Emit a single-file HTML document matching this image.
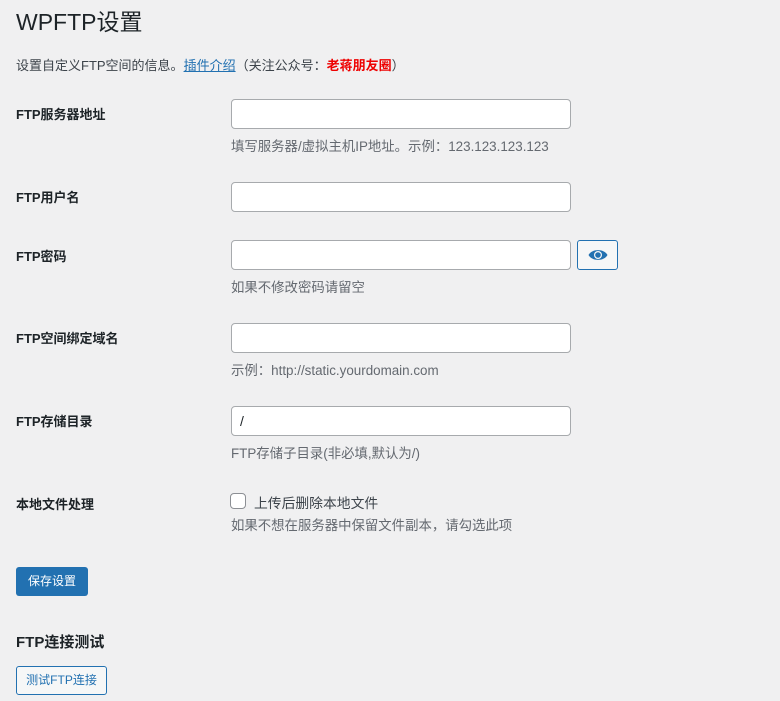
<!DOCTYPE html>
<html><head><meta charset="utf-8"><style>
body{margin:0;background:#f0f0f1;width:780px;height:701px;overflow:hidden;font-family:"Liberation Sans","Noto Sans CJK SC",sans-serif;color:#1d2327;font-size:13px;position:relative}
.a{position:absolute;white-space:nowrap}
h1{position:absolute;left:16px;top:7px;margin:0;font-size:23px;font-weight:400;line-height:30px}
.lbl{font-weight:600;font-size:13px}
.in{position:absolute;left:231px;width:338px;height:28px;background:#fff;border:1px solid #a7aaad;border-radius:4px}
.d{color:#646970;font-size:13.4px}
</style></head><body>
<h1>WPFTP设置</h1>
<div class="a" style="left:16px;top:55px;color:#3c434a">设置自定义FTP空间的信息。<a style="color:#2271b1;text-decoration:underline">插件介绍</a>（关注公众号：<span style="color:#e00;font-weight:600">老蒋朋友圈</span>）</div>

<div class="a lbl" style="left:16px;top:104px">FTP服务器地址</div>
<div class="in" style="top:99px"></div>
<div class="a d" style="left:231px;top:135px">填写服务器/虚拟主机IP地址。示例：123.123.123.123</div>

<div class="a lbl" style="left:16px;top:187px">FTP用户名</div>
<div class="in" style="top:182px"></div>

<div class="a lbl" style="left:16px;top:246px">FTP密码</div>
<div class="in" style="top:240px"></div>
<div class="a" style="left:577px;top:240px;width:39px;height:28px;border:1px solid #2271b1;border-radius:3px;background:#f6f7f7">
<svg width="20" height="14" viewBox="0 0 20 14" style="position:absolute;left:10px;top:7px"><path d="M0.5 7C4 0.5 16 0.5 19.5 7C16 13.5 4 13.5 0.5 7Z" fill="#2271b1"/><circle cx="10" cy="7" r="4" fill="#f6f7f7"/><circle cx="10" cy="7" r="2.8" fill="#2271b1"/></svg></div>
<div class="a d" style="left:231px;top:276px">如果不修改密码请留空</div>

<div class="a lbl" style="left:16px;top:328px">FTP空间绑定域名</div>
<div class="in" style="top:323px"></div>
<div class="a d" style="left:231px;top:359px">示例：http://static.yourdomain.com</div>

<div class="a lbl" style="left:16px;top:411px">FTP存储目录</div>
<div class="in" style="top:406px"><span style="position:absolute;left:8px;top:6px;font-size:14px">/</span></div>
<div class="a d" style="left:231px;top:442px">FTP存储子目录(非必填,默认为/)</div>

<div class="a lbl" style="left:16px;top:494px">本地文件处理</div>
<div class="a" style="left:230px;top:493px;width:14px;height:14px;border:1px solid #8c8f94;border-radius:4px;background:#fff"></div>
<div class="a" style="left:254px;top:492px;font-size:13.8px;color:#3c434a">上传后删除本地文件</div>
<div class="a d" style="left:231px;top:514px">如果不想在服务器中保留文件副本，请勾选此项</div>

<div class="a" style="left:16px;top:567px;width:72px;height:29px;background:#2271b1;border-radius:3px;color:#fff;font-size:12px;line-height:29px;text-align:center">保存设置</div>

<div class="a" style="left:16px;top:631px;font-size:15px;font-weight:600">FTP连接测试</div>
<div class="a" style="left:16px;top:666px;width:89px;height:27px;border:1px solid #2271b1;border-radius:3px;background:#f6f7f7;color:#2271b1;font-size:12px;line-height:27px;text-align:center">测试FTP连接</div>
</body></html>
